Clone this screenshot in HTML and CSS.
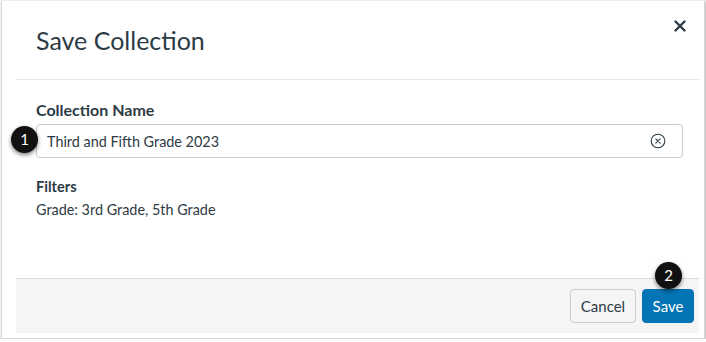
FILE: index.html
```html
<!DOCTYPE html>
<html lang="en">
<head>
    <meta charset="UTF-8">
    <title>Save Collection</title>
    <link rel="stylesheet" href="styles.css">
</head>
<body>
<div class="frame">
    <div class="modal">
        <!--header-->
        <div class="modal_head">
            <h2 class="modal_title">Save Collection</h2>
            <a class="modal_close" href="#">
                <svg width="12" height="12" viewBox="0 0 12 12"><path d="M1.5 1.5L10.5 10.5M10.5 1.5L1.5 10.5" stroke="#2d3b45" stroke-width="2.4" stroke-linecap="round"/></svg>
            </a>
        </div>
        <!--body-->
        <div class="modal_body">
            <label class="field_label" for="collection_name">Collection Name</label>
            <div class="field_box">
                <span class="callout callout_1">1</span>
                <input class="field_input" id="collection_name" type="text" value="Third and Fifth Grade 2023">
                <span class="field_clear">
                    <svg width="16" height="16" viewBox="0 0 16 16"><circle cx="8" cy="8" r="6.8" fill="none" stroke="#2d3b45" stroke-width="1.1"/><path d="M5.8 5.8L10.2 10.2M10.2 5.8L5.8 10.2" stroke="#2d3b45" stroke-width="1.1" stroke-linecap="round"/></svg>
                </span>
            </div>
            <h3 class="filters_title">Filters</h3>
            <p class="filters_text">Grade: 3rd Grade, 5th Grade</p>
        </div>
        <!--footer-->
        <div class="modal_foot">
            <button class="btn btn_default">Cancel</button>
            <div class="btn_wrap">
                <span class="callout callout_2">2</span>
                <button class="btn btn_primary">Save</button>
            </div>
        </div>
    </div>
</div>
</body>
</html>
```
FILE: styles.css
```css
/*Initialization style*/
html,body,div,p,h2,h3,label,input,button{margin:0;padding:0;}
body{background:#fff;font:normal 16px Lato,"Open Sans",sans-serif;color:#2d3b45;}

/*frame*/
.frame{width:702px;height:337px;margin-left:1px;border:1px solid #d6d6d6;border-top-color:#eee;box-shadow:1px 2px 3px rgba(0,0,0,.35);background:#fff;}
.modal{margin-left:14px;width:683px;height:100%;display:flex;flex-direction:column;}

/*header*/
.modal_head{height:78px;border-bottom:1px solid #e4e6e8;display:flex;justify-content:space-between;padding:0 13px 0 20px;}
.modal_title{font-weight:normal;font-size:25px;line-height:30px;padding-top:24px;color:#2d3b45;}
.modal_close{display:block;width:12px;height:12px;margin-top:15px;}

/*body*/
.modal_body{flex:1;padding:20px 16px 0 20px;}
.field_label{display:block;font-weight:bold;font-size:16px;line-height:20px;}
.field_box{position:relative;margin-top:4px;height:32px;border:1px solid #c7cdd1;border-radius:4px;display:flex;align-items:center;}
.field_input{flex:1;border:0;outline:none;background:transparent;font:normal 14.4px Lato,sans-serif;color:#2d3b45;padding-left:10px;height:30px;}
.field_clear{width:16px;height:16px;margin-right:16px;display:flex;}
.filters_title{margin-top:19px;font-size:14.6px;line-height:20px;font-weight:bold;}
.filters_text{margin-top:2px;font-size:14.4px;line-height:22px;}

/*footer*/
.modal_foot{height:54px;margin-bottom:5px;background:#f5f5f5;border-top:1px solid #dcdcdc;display:flex;justify-content:flex-end;align-items:center;gap:6px;padding-right:5px;}
.btn{font:normal 15px Lato,sans-serif;height:34px;border-radius:4px;cursor:pointer;}
.btn_default{width:66px;background:#f5f5f5;border:1px solid #c7cdd1;color:#2d3b45;}
.btn_primary{width:52px;background:#0374b5;border:1px solid #0374b5;color:#fff;}
.btn_wrap{position:relative;}

/*callouts*/
.callout{position:absolute;width:27px;height:27px;border-radius:50%;background:#111;color:#fff;font:normal 15px Lato,sans-serif;line-height:27px;text-align:center;box-shadow:0 2px 4px rgba(0,0,0,.5);z-index:10;}
.callout_1{left:-26px;top:1px;}
.callout_2{left:13px;top:-27px;}
```
